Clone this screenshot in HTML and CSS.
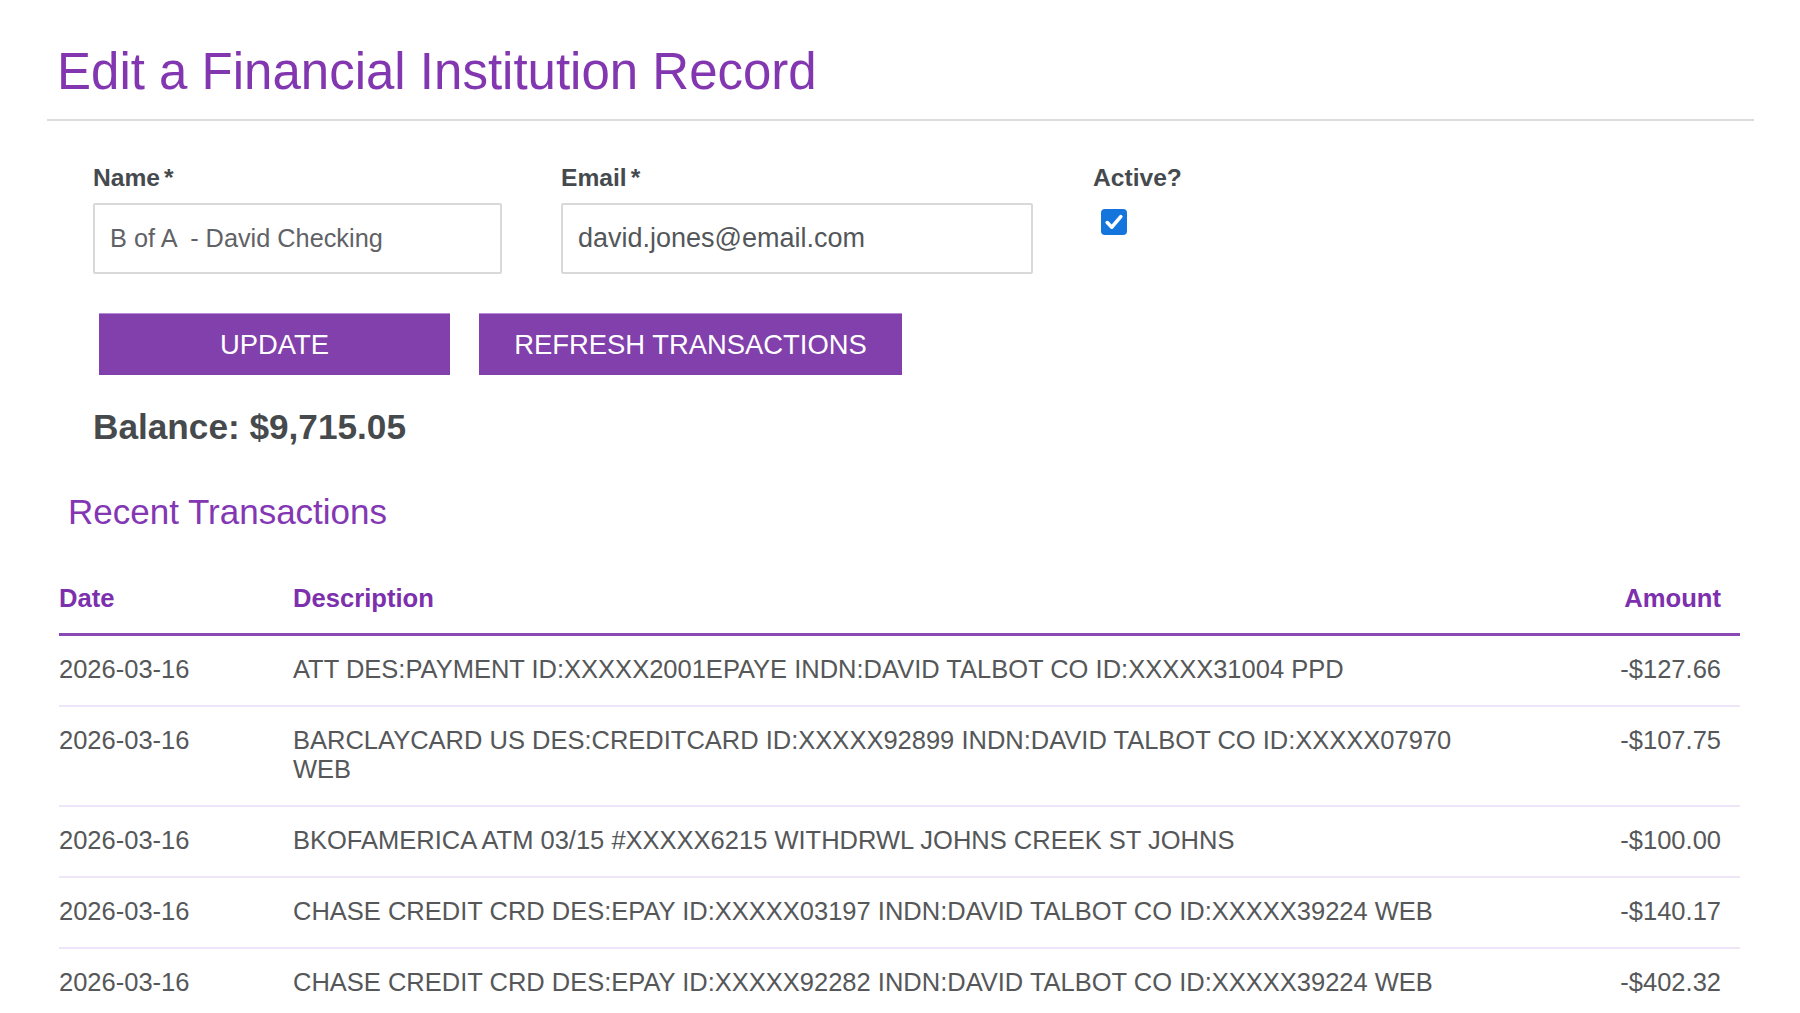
FILE: index.html
```html
<!DOCTYPE html>
<html lang="en">
<head>
<meta charset="utf-8">
<title>Edit a Financial Institution Record</title>
<link rel="stylesheet" href="styles.css">
</head>
<body>
<div class="page">
  <h1 class="title">Edit a Financial Institution Record</h1>
  <hr class="divider">
  <form class="record-form">
    <div class="fields">
      <div class="field field-name">
        <label class="field-label" for="name">Name<span class="req">*</span></label>
        <input class="text-input name-input" id="name" type="text" value="B of A  - David Checking">
      </div>
      <div class="field field-email">
        <label class="field-label" for="email">Email<span class="req">*</span></label>
        <input class="text-input email-input" id="email" type="text" value="david.jones@email.com">
      </div>
      <div class="field field-active">
        <span class="field-label">Active?</span>
        <span class="checkbox" role="checkbox" aria-checked="true">
          <svg width="26" height="26" viewBox="0 0 26 26" aria-hidden="true">
            <rect x="0" y="0" width="26" height="26" rx="4" ry="4" fill="#1476dc"/>
            <path d="M6.2 13.6 L10.8 18.2 L19.8 7.6" fill="none" stroke="#ffffff" stroke-width="3.6" stroke-linecap="round" stroke-linejoin="round"/>
          </svg>
        </span>
      </div>
    </div>
    <div class="actions">
      <button type="button" class="btn btn-update">UPDATE</button>
      <button type="button" class="btn btn-refresh">REFRESH TRANSACTIONS</button>
    </div>
    <div class="balance">Balance: $9,715.05</div>
  </form>
  <h2 class="section-title">Recent Transactions</h2>
  <table class="tx-table">
    <colgroup>
      <col class="col-date">
      <col class="col-desc">
      <col class="col-amount">
    </colgroup>
    <thead>
      <tr>
        <th class="c-date">Date</th>
        <th class="c-desc">Description</th>
        <th class="c-amount">Amount</th>
      </tr>
    </thead>
    <tbody>
      <tr>
        <td class="c-date">2026-03-16</td>
        <td class="c-desc">ATT DES:PAYMENT ID:XXXXX2001EPAYE INDN:DAVID TALBOT CO ID:XXXXX31004 PPD</td>
        <td class="c-amount">-$127.66</td>
      </tr>
      <tr>
        <td class="c-date">2026-03-16</td>
        <td class="c-desc">BARCLAYCARD US DES:CREDITCARD ID:XXXXX92899 INDN:DAVID TALBOT CO ID:XXXXX07970 WEB</td>
        <td class="c-amount">-$107.75</td>
      </tr>
      <tr>
        <td class="c-date">2026-03-16</td>
        <td class="c-desc">BKOFAMERICA ATM 03/15 #XXXXX6215 WITHDRWL JOHNS CREEK ST JOHNS</td>
        <td class="c-amount">-$100.00</td>
      </tr>
      <tr>
        <td class="c-date">2026-03-16</td>
        <td class="c-desc">CHASE CREDIT CRD DES:EPAY ID:XXXXX03197 INDN:DAVID TALBOT CO ID:XXXXX39224 WEB</td>
        <td class="c-amount">-$140.17</td>
      </tr>
      <tr>
        <td class="c-date">2026-03-16</td>
        <td class="c-desc">CHASE CREDIT CRD DES:EPAY ID:XXXXX92282 INDN:DAVID TALBOT CO ID:XXXXX39224 WEB</td>
        <td class="c-amount">-$402.32</td>
      </tr>
    </tbody>
  </table>
</div>
</body>
</html>
```

FILE: styles.css
```css
* {
  box-sizing: border-box;
}

html, body {
  margin: 0;
  padding: 0;
  background: #ffffff;
  font-family: "Liberation Sans", Arial, sans-serif;
  color: #555555;
}

.page {
  padding: 41px 46px 0 47px;
  width: 1800px;
}

.title {
  margin: 0 0 0 10px;
  font-size: 51px;
  line-height: 61px;
  font-weight: normal;
  color: #8236b0;
}

.divider {
  margin: 17px 0 0 0;
  border: 0;
  height: 2px;
  background: #dcdcdc;
}

.record-form {
  padding-left: 46px;
  margin-top: 43px;
}

.fields {
  display: flex;
  align-items: flex-start;
}

.field {
  display: flex;
  flex-direction: column;
}

.field-name {
  width: 409px;
}

.field-email {
  width: 472px;
  margin-left: 59px;
}

.field-active {
  margin-left: 60px;
}

.field-label {
  font-size: 24.6px;
  line-height: 28px;
  font-weight: bold;
  color: #454a4e;
}

.req {
  margin-left: 4px;
  font-weight: bold;
}

.text-input {
  margin-top: 11px;
  height: 71px;
  width: 100%;
  border: 2px solid #d9d9d9;
  border-radius: 2px;
  background: #ffffff;
  font-family: "Liberation Sans", Arial, sans-serif;
  padding: 0 15px;
  outline: none;
}

.name-input {
  font-size: 25.3px;
  color: #5f6266;
}

.email-input {
  font-size: 27px;
  color: #54575a;
}

.checkbox {
  display: block;
  width: 26px;
  height: 26px;
  margin-top: 17px;
  margin-left: 8px;
}

.checkbox svg {
  display: block;
}

.actions {
  display: flex;
  gap: 29px;
  margin-top: 39px;
  margin-left: 6px;
}

.btn {
  height: 62px;
  border: 0;
  border-top: 1px solid #b98ad8;
  background: #8140ab;
  color: #ffffff;
  font-family: "Liberation Sans", Arial, sans-serif;
  font-size: 27.4px;
  padding: 0 30px;
  cursor: pointer;
}

.btn-update {
  width: 351px;
}

.btn-refresh {
  width: 423px;
}

.balance {
  margin-top: 32px;
  font-size: 35.2px;
  line-height: 40px;
  font-weight: bold;
  color: #464a4d;
}

.section-title {
  margin: 45px 0 0 21px;
  font-size: 35px;
  line-height: 40px;
  font-weight: normal;
  color: #8437b3;
}

.tx-table {
  margin: 34px 0 0 12px;
  width: 1681px;
  border-collapse: collapse;
  table-layout: fixed;
}

.col-date {
  width: 234px;
}

.col-amount {
  width: 240px;
}

.tx-table th {
  font-size: 25.6px;
  line-height: 28px;
  font-weight: bold;
  color: #7c30ad;
  text-align: left;
  padding: 18px 0 21px 0;
  border-bottom: 3px solid #8a48b6;
}

.tx-table td {
  font-size: 25.5px;
  line-height: 29px;
  color: #555759;
  padding: 19px 0 21px 0;
  vertical-align: top;
  border-bottom: 2px solid #efe5f8;
}

.tx-table .c-desc {
  padding-right: 20px;
}

.tx-table .c-amount {
  text-align: right;
  padding-right: 19px;
}
```
